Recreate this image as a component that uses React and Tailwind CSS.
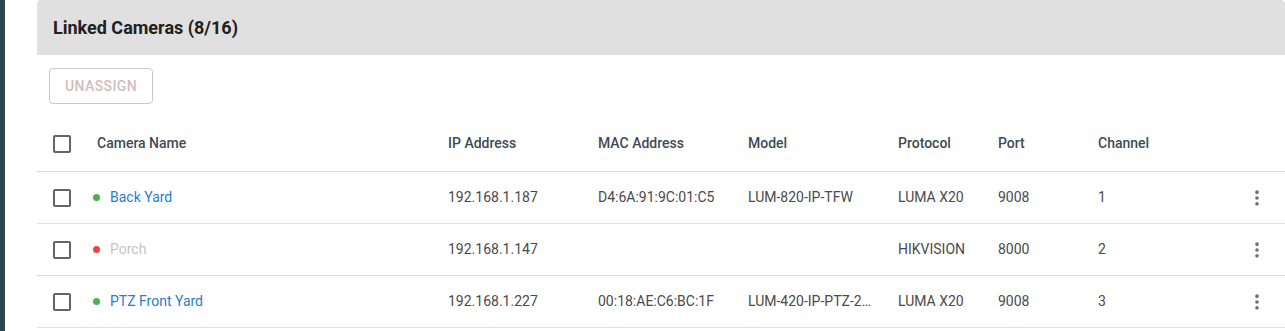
import { EllipsisVertical } from 'lucide-react'

const cams = [
  { name: 'Back Yard', online: true, ip: '192.168.1.187', mac: 'D4:6A:91:9C:01:C5', model: 'LUM-820-IP-TFW', protocol: 'LUMA X20', port: '9008', channel: '1' },
  { name: 'Porch', online: false, ip: '192.168.1.147', mac: '', model: '', protocol: 'HIKVISION', port: '8000', channel: '2' },
  { name: 'PTZ Front Yard', online: true, ip: '192.168.1.227', mac: '00:18:AE:C6:BC:1F', model: 'LUM-420-IP-PTZ-2MP', protocol: 'LUMA X20', port: '9008', channel: '3' },
]

function Box(){
  return <div className="h-[18px] w-[18px] rounded-[2px] border-2 border-[#646464]"/>
}

export default function App(){
  return (
    <div className="flex h-[331px] w-[1285px] overflow-hidden bg-white" style={{ fontFamily: 'Roboto, "Liberation Sans", sans-serif' }}>
      <div className="w-[5px] shrink-0 bg-[#2f434c]"/>
      <div className="w-[32px] shrink-0"/>
      <div className="flex-1">
        <div className="flex h-[55px] items-center rounded-t-[4px] bg-[#e0e0e0] pl-4">
          <h2 className="text-[18px] font-bold text-[#212121]">Linked Cameras (8/16)</h2>
        </div>
        <div className="h-[61px] pl-3 pt-[13px]">
          <button className="h-[36px] rounded-[4px] border border-[#c9c9c9] px-[15px] text-[14px] font-medium uppercase tracking-[0.4px] text-[#d2bcbc]">Unassign</button>
        </div>
        <div className="flex h-[56px] items-center border-b border-[#e0e0e0] pl-4 text-[14px] font-medium text-[#3f4b52]">
          <div className="w-[44px]"><Box/></div>
          <div className="w-[351px]">Camera Name</div>
          <div className="w-[150px]">IP Address</div>
          <div className="w-[150px]">MAC Address</div>
          <div className="w-[150px]">Model</div>
          <div className="w-[100px]">Protocol</div>
          <div className="w-[100px]">Port</div>
          <div className="flex-1">Channel</div>
        </div>
        {cams.map(c=> (
          <div key={c.name} className="flex h-[52px] items-center border-b border-[#e0e0e0] pl-4 text-[14px] text-[#4a4a4a]">
            <div className="w-[44px]"><Box/></div>
            <div className="flex w-[351px] items-center">
              <span className={'-ml-[4px] mr-[10px] h-[7px] w-[7px] rounded-full ' + (c.online ? 'bg-[#4caf50]' : 'bg-[#f44336]')}/>
              <span className={c.online ? 'text-[#2a7bd3]' : 'text-[#c4c4c4]'}>{c.name}</span>
            </div>
            <div className="w-[150px]">{c.ip}</div>
            <div className="w-[150px]">{c.mac}</div>
            <div className="w-[150px] pr-[18px]"><div className="truncate">{c.model}</div></div>
            <div className="w-[100px]">{c.protocol}</div>
            <div className="w-[100px]">{c.port}</div>
            <div className="flex-1">{c.channel}</div>
            <div className="mr-[18px] flex w-[20px] justify-center text-[#6e6e6e]">
              <EllipsisVertical size={20} strokeWidth={2.4}/>
            </div>
          </div>
        ))}
      </div>
    </div>
  )
}
